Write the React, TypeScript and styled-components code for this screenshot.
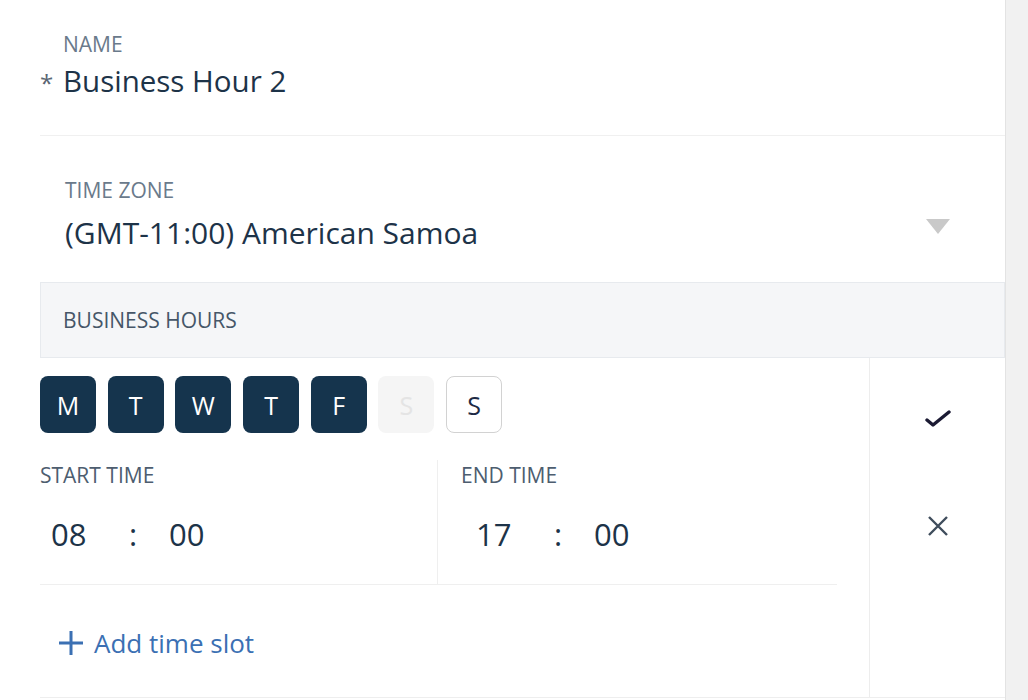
import React from 'react';
import styled, { createGlobalStyle } from 'styled-components';

const GlobalStyle = createGlobalStyle`
  html, body {
    margin: 0;
    padding: 0;
    background: #fff;
    font-family: 'Open Sans', 'Noto Sans', sans-serif;
  }
  * { box-sizing: border-box; }
`;

const Screen = styled.div`
  display: flex;
  width: 1028px;
  height: 700px;
  overflow: hidden;
`;

const Panel = styled.div`
  width: 1006px;
  border-right: 1px solid #e3e3e3;
  display: flex;
  flex-direction: column;
  padding-left: 40px;
`;

const ScrollTrack = styled.div`
  flex: 1;
  background: #f1f1f1;
`;

const NameField = styled.div`
  height: 136px;
  padding-top: 31px;
  border-bottom: 1px solid #f0f0f0;
`;

const FieldLabel = styled.div<{ $indent?: number }>`
  font-size: 21px;
  line-height: 26px;
  color: #6a7a8b;
  padding-left: ${p => p.$indent ?? 0}px;
`;

const ValueRow = styled.div`
  display: flex;
  align-items: baseline;
  margin-top: 4px;
`;

const Required = styled.span`
  width: 23px;
  font-size: 24px;
  color: #5a6673;
`;

const FieldValue = styled.span<{ $size?: number }>`
  font-size: ${p => p.$size ?? 29.5}px;
  line-height: 40px;
  color: #1d3348;
`;

const ZoneField = styled.div`
  height: 146px;
  padding: 41px 55px 0 25px;
  display: flex;
  align-items: flex-start;
  justify-content: space-between;
`;

const ZoneText = styled.div`
  display: flex;
  flex-direction: column;
  gap: 10px;
`;

const Caret = styled.div`
  margin-top: 42px;
  width: 0;
  height: 0;
  border-left: 12px solid transparent;
  border-right: 12px solid transparent;
  border-top: 15px solid #c9c9c9;
`;

const SectionHeader = styled.div`
  height: 76px;
  background: #f5f6f8;
  border: 1px solid #e7eaee;
  display: flex;
  align-items: center;
  padding-left: 22px;
  font-size: 21px;
  color: #465668;
`;

const SlotArea = styled.div`
  display: flex;
  height: 340px;
  border-bottom: 1px solid #eeeeee;
`;

const SlotMain = styled.div`
  width: 830px;
  border-right: 1px solid #ededed;
  display: flex;
  flex-direction: column;
`;

const DayRow = styled.div`
  display: flex;
  gap: 11.7px;
  padding-top: 18px;
`;

const DayButton = styled.div<{ $state: 'on' | 'off' | 'disabled' }>`
  width: 56px;
  height: 57px;
  border-radius: 8px;
  display: flex;
  align-items: center;
  justify-content: center;
  font-size: 25px;
  background: ${p => (p.$state === 'on' ? '#15344d' : p.$state === 'disabled' ? '#f5f5f5' : '#fff')};
  color: ${p => (p.$state === 'on' ? '#fff' : p.$state === 'disabled' ? '#e4e4e4' : '#1d2a44')};
  border: 1px solid ${p => (p.$state === 'off' ? '#d2d2d2' : 'transparent')};
`;

const TimeRow = styled.div`
  display: flex;
  width: 797px;
  height: 125px;
  margin-top: 27px;
  border-bottom: 1px solid #efefef;
`;

const TimeCol = styled.div<{ $first?: boolean }>`
  width: ${p => (p.$first ? '398px' : 'auto')};
  flex: ${p => (p.$first ? 'none' : '1')};
  border-right: ${p => (p.$first ? '1px solid #efefef' : 'none')};
  padding-left: ${p => (p.$first ? 0 : 23)}px;
  padding-top: 2px;
`;

const TimeLabel = styled.div`
  font-size: 21px;
  line-height: 26px;
  color: #4d5d6f;
`;

const TimeValue = styled.div<{ $pad: number }>`
  display: flex;
  align-items: baseline;
  padding-left: ${p => p.$pad}px;
  margin-top: 25px;
  font-size: 31px;
  color: #1d3348;
`;

const Digits = styled.span`
  width: 78px;
`;

const Colon = styled.span`
  width: 40px;
`;

const AddSlot = styled.div`
  display: flex;
  align-items: center;
  gap: 10px;
  padding-left: 18px;
  padding-top: 4px;
  flex: 1;
  color: #3b70b3;
  font-size: 26px;
`;

const SlotActions = styled.div`
  flex: 1;
  display: flex;
  flex-direction: column;
  align-items: center;
  padding-top: 46px;
  gap: 80px;
`;

const IconBox = styled.div`
  width: 28px;
  height: 28px;
  display: flex;
  align-items: center;
  justify-content: center;
`;

const days: { letter: string; state: 'on' | 'off' | 'disabled' }[] = [
  { letter: 'M', state: 'on' },
  { letter: 'T', state: 'on' },
  { letter: 'W', state: 'on' },
  { letter: 'T', state: 'on' },
  { letter: 'F', state: 'on' },
  { letter: 'S', state: 'disabled' },
  { letter: 'S', state: 'off' },
];

const App: React.FC = () => (
  <>
    <GlobalStyle />
    <Screen>
      <Panel>
        <NameField>
          <FieldLabel $indent={23}>NAME</FieldLabel>
          <ValueRow>
            <Required>*</Required>
            <FieldValue>Business Hour 2</FieldValue>
          </ValueRow>
        </NameField>

        <ZoneField>
          <ZoneText>
            <FieldLabel>TIME ZONE</FieldLabel>
            <FieldValue $size={30}>(GMT-11:00) American Samoa</FieldValue>
          </ZoneText>
          <Caret />
        </ZoneField>

        <SectionHeader>BUSINESS HOURS</SectionHeader>

        <SlotArea>
          <SlotMain>
            <DayRow>
              {days.map((d, i) => (
                <DayButton key={i} $state={d.state}>{d.letter}</DayButton>
              ))}
            </DayRow>
            <TimeRow>
              <TimeCol $first>
                <TimeLabel>START TIME</TimeLabel>
                <TimeValue $pad={11}>
                  <Digits>08</Digits>
                  <Colon>:</Colon>
                  <span>00</span>
                </TimeValue>
              </TimeCol>
              <TimeCol>
                <TimeLabel>END TIME</TimeLabel>
                <TimeValue $pad={15}>
                  <Digits>17</Digits>
                  <Colon>:</Colon>
                  <span>00</span>
                </TimeValue>
              </TimeCol>
            </TimeRow>
            <AddSlot>
              <svg width="26" height="26" viewBox="0 0 26 26">
                <path d="M13 1v24M1 13h24" stroke="#3b70b3" strokeWidth="3" />
              </svg>
              <span>Add time slot</span>
            </AddSlot>
          </SlotMain>
          <SlotActions>
            <IconBox>
              <svg width="26" height="20" viewBox="0 0 26 20">
                <path d="M2 12l6 5L24 4" fill="none" stroke="#1b1a33" strokeWidth="3.4" strokeLinecap="round" strokeLinejoin="round" />
              </svg>
            </IconBox>
            <IconBox>
              <svg width="22" height="22" viewBox="0 0 22 22">
                <path d="M2 2l18 18M20 2L2 20" stroke="#3f4d5c" strokeWidth="2.4" />
              </svg>
            </IconBox>
          </SlotActions>
        </SlotArea>
      </Panel>
      <ScrollTrack />
    </Screen>
  </>
);

export default App;
